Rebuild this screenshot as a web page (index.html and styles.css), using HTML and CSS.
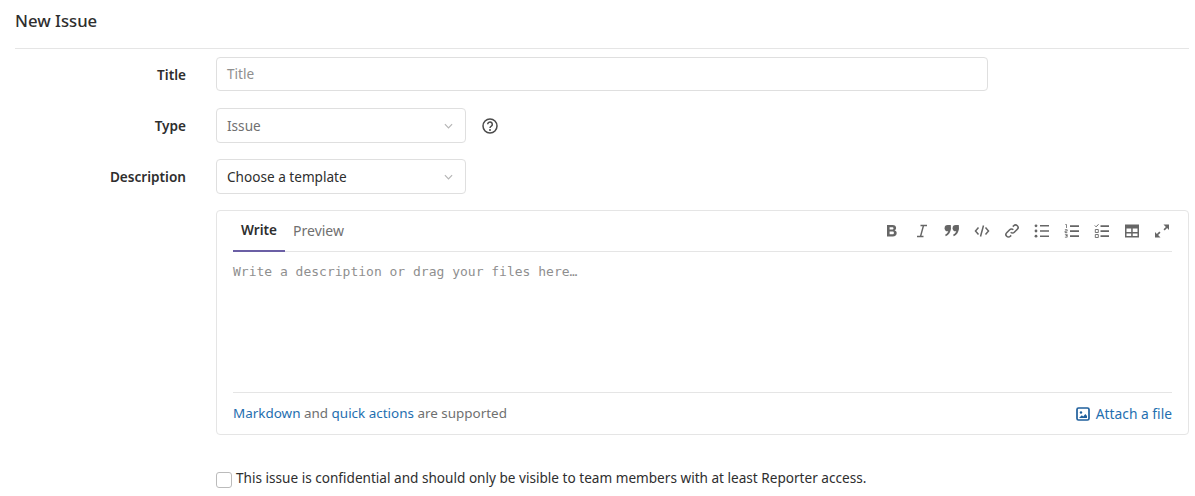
FILE: index.html
```html
<!DOCTYPE html>
<html lang="en">
<head>
<meta charset="utf-8">
<title>New Issue</title>
<link rel="stylesheet" href="styles.css">
</head>
<body>
<main class="page">
  <h1 class="page-title">New Issue</h1>
  <form class="form">
    <div class="row row-title">
      <label class="label">Title</label>
      <div class="input placeholder title-input">Title</div>
    </div>
    <div class="row row-type">
      <label class="label">Type</label>
      <div class="select muted">Issue
        <svg class="chev" viewBox="0 0 10 6"><path d="M1 1l4 4 4-4" fill="none" stroke="#b5b5b5" stroke-width="1.3"/></svg>
      </div>
      <svg class="help" viewBox="0 0 16 16"><circle cx="8" cy="8" r="7" fill="none" stroke="#4a4a4a" stroke-width="1.5"/><path d="M5.700 6.300a2.300 2.300 0 1 1 3.600 1.900c-.8.5-1.300 1-1.300 1.800" fill="none" stroke="#4a4a4a" stroke-width="1.500"/><circle cx="8" cy="12" r="1" fill="#4a4a4a"/></svg>
    </div>
    <div class="row row-desc">
      <label class="label">Description</label>
      <div class="select">Choose a template
        <svg class="chev" viewBox="0 0 10 6"><path d="M1 1l4 4 4-4" fill="none" stroke="#b5b5b5" stroke-width="1.3"/></svg>
      </div>
    </div>
    <section class="editor">
      <div class="toolbar">
        <div class="tabs">
          <span class="tab active">Write</span>
          <span class="tab tab-preview">Preview</span>
        </div>
        <div class="tools">
          <svg class="tool" viewBox="0 0 16 16"><path d="M3 2h5.600c2.200 0 3.500 1.100 3.500 2.900 0 1.100-.6 2-1.600 2.400 1.300.4 2.200 1.400 2.200 2.800 0 2.100-1.500 3.400-3.900 3.400H3zm2.600 2.200v2.300h2.500c.9 0 1.400-.4 1.400-1.200 0-.7-.5-1.100-1.400-1.100zm0 4.400v2.700h2.800c1 0 1.500-.5 1.500-1.400s-.5-1.300-1.500-1.300z" fill-rule="evenodd"/></svg>
          <svg class="tool" viewBox="0 0 16 16"><path d="M6.500 2.500h6.500M3 13.500h6.500M9.500 2.500L6.500 13.500" fill="none" stroke="#666" stroke-width="1.400"/></svg>
          <svg class="tool" viewBox="0 0 16 16"><circle cx="3.700" cy="5.200" r="3.100"/><path d="M4 2.100h2.800v3.500c0 3.600-1.900 6.400-5 7.600l-.7-1.500c2.300-1.100 3.400-3 3.400-5.100z"/><circle cx="11.700" cy="5.200" r="3.100"/><path d="M12 2.100h2.800v3.500c0 3.600-1.900 6.400-5 7.600l-.7-1.500c2.300-1.100 3.400-3 3.400-5.100z"/></svg>
          <svg class="tool" viewBox="0 0 16 16"><path d="M4.500 4.500L1.500 8l3 3.500M11.500 4.500l3 3.500-3 3.500M9.500 2.500l-3 11" fill="none" stroke="#666" stroke-width="1.500"/></svg>
          <svg class="tool" viewBox="0 0 16 16"><path d="M6.700 9.300a2.500 2.500 0 0 0 3.600 0l3-3a2.500 2.500 0 0 0-3.600-3.600L8.800 3.600M9.300 6.700a2.500 2.500 0 0 0-3.600 0l-3 3a2.500 2.500 0 0 0 3.600 3.600l.9-.9" fill="none" stroke="#666" stroke-width="1.600"/></svg>
          <svg class="tool" viewBox="0 0 16 16"><path d="M6 2h9v1.600H6zM6 7.200h9v1.600H6zM6 12.400h9V14H6z"/><circle cx="2" cy="2.800" r="1.400"/><circle cx="2" cy="8" r="1.400"/><circle cx="2" cy="13.200" r="1.400"/></svg>
          <svg class="tool" viewBox="0 0 16 16"><path d="M6 2.300h9v1.600H6zM6 7.300h9v1.600H6zM6 12.300h9v1.600H6z"/><path d="M1.300 1.500h1.200v3.500M.9 6.700h2.300v1.400H1v1.400h2.300M.9 11.300h2.300v1.300H1.800h1.400v1.600H.9" fill="none" stroke="#666" stroke-width=".8"/></svg>
          <svg class="tool" viewBox="0 0 16 16"><path d="M6.500 2.300h8.500v1.600H6.500zM6.500 7.300h8.500v1.600H6.500zM6.500 12.300h8.500v1.600H6.500z"/><path d="M.8 2.500l1.300 1.300L4.500 1.300" fill="none" stroke="#666" stroke-width="1"/><path d="M1.300 6.500h3v3h-3zM1.300 11.500h3v3h-3z" fill="none" stroke="#666" stroke-width=".9"/></svg>
          <svg class="tool" viewBox="0 0 16 16"><path d="M1 1.500h14v13H1zm1.500 4v3.500h4.700V5.500zm6.200 0v3.500h4.800V5.500zM2.500 10.400V13h4.700v-2.600zm6.200 0V13h4.800v-2.600z" fill-rule="evenodd"/></svg>
          <svg class="tool" viewBox="0 0 16 16"><path d="M9.500 1.500H15V7l-1.900-1.900-2.400 2.400-1.200-1.200 2.400-2.400zM6.500 14.500H1V9l1.900 1.900 2.400-2.400 1.200 1.200-2.400 2.400z"/></svg>
        </div>
      </div>
      <div class="textarea">Write a description or drag your files here…</div>
      <div class="editor-foot">
        <span class="hint"><a class="link" href="#">Markdown</a> and <a class="link" href="#">quick actions</a> are supported</span>
        <a class="link attach" href="#">
          <svg class="attach-icon" viewBox="0 0 14 14"><rect x="1" y="1" width="12" height="12" rx="1.500" fill="none" stroke="#1f5f9c" stroke-width="1.700"/><circle cx="5" cy="5.500" r="1.200" fill="#1f5f9c"/><path d="M3 11l2.800-2.800 1.500 1.300L9.300 7 11 9v2z" fill="#1f5f9c"/></svg>
          Attach a file</a>
      </div>
    </section>
    <label class="confidential">
      <span class="checkbox"></span>
      <span class="confidential-text">This issue is confidential and should only be visible to team members with at least Reporter access.</span>
    </label>
  </form>
</main>
</body>
</html>
```

FILE: styles.css
```css
* { box-sizing: border-box; }
html, body { margin: 0; padding: 0; }
body {
  background: #fff;
  color: #2e2e2e;
  font-family: "Noto Sans", "Open Sans", sans-serif;
  font-size: 13.6px;
  overflow: hidden;
}
.page { padding: 0 6px 0 15px; }
.page-title {
  margin: 0;
  height: 49px;
  padding-top: 10px;
  font-size: 16.7px;
  line-height: 22px;
  font-weight: 500;
  color: #2e2e2e;
  border-bottom: 1px solid #e5e5e5;
}
.form { display: flex; flex-direction: column; padding-top: 8px; }
.row { display: flex; align-items: center; }
.row-title { height: 34px; }
.row-type { height: 35px; margin-top: 17px; }
.row-desc { height: 35px; margin-top: 16px; }
.label {
  width: 171px;
  text-align: right;
  font-weight: 600;
  color: #2e2e2e;
}
.input, .select {
  margin-left: 30px;
  border: 1px solid #dfdfdf;
  border-radius: 4px;
  padding: 0 10px;
  display: flex;
  align-items: center;
  height: 100%;
}
.title-input { width: 772px; padding-bottom: 2px; }
.placeholder { color: #8f8f8f; }
.select { width: 250px; justify-content: space-between; color: #2e2e2e; }
.select.muted { color: #707070; }
.chev { width: 9px; height: 6px; margin-right: 2px; }
.help { width: 16px; height: 16px; margin-left: 16px; }
.editor {
  margin: 16px 0 0 201px;
  height: 225px;
  border: 1px solid #e5e5e5;
  border-radius: 4px;
  padding: 0 16px;
  display: flex;
  flex-direction: column;
}
.toolbar {
  display: flex;
  justify-content: space-between;
  align-items: center;
  height: 41px;
  border-bottom: 1px solid #e5e5e5;
}
.tabs { display: flex; height: 41px; }
.tab {
  padding: 0 8px 2px;
  display: flex;
  align-items: center;
  color: #707070;
  height: 41px;
}
.tab.active {
  font-weight: 600;
  color: #2e2e2e;
  border-bottom: 2px solid #6b5fa5;
}
.tab-preview { font-size: 14px; }
.tools { display: flex; gap: 14px; align-items: center; margin-right: 2px; }
.tool { width: 16px; height: 16px; fill: #666; display: block; }
.textarea {
  flex: 1;
  padding-top: 12px;
  font-family: "DejaVu Sans Mono", monospace;
  font-size: 13px;
  line-height: 16px;
  color: #8f8f8f;
}
.editor-foot {
  height: 42px;
  border-top: 1px solid #e5e5e5;
  display: flex;
  justify-content: space-between;
  align-items: center;
  color: #707070;
}
.hint { padding-bottom: 2px; font-size: 13.45px; }
.link { color: #1f6fb0; text-decoration: none; }
.attach { display: flex; align-items: center; gap: 6px; font-size: 13.8px; }
.attach-icon { width: 14px; height: 14px; }
.confidential {
  margin: 33px 0 0 201px;
  display: flex;
  align-items: flex-start;
  gap: 4px;
  color: #2e2e2e;
}
.checkbox {
  width: 16px;
  height: 16px;
  border: 1px solid #bbb;
  border-radius: 3px;
  margin-top: 4px;
}
```
